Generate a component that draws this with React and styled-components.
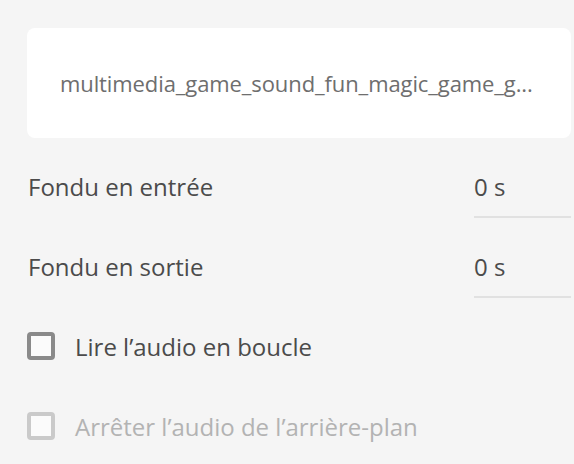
import React from 'react';
import styled, { createGlobalStyle } from 'styled-components';

const GlobalStyle = createGlobalStyle`
  html, body {
    margin: 0;
    padding: 0;
    background: #f5f5f5;
  }
  body {
    font-family: 'Open Sans', 'Noto Sans', sans-serif;
  }
`;

const Panel = styled.div`
  width: 574px;
  height: 464px;
  box-sizing: border-box;
  padding: 28px 3px 0 27px;
  background: #f5f5f5;
  overflow: hidden;
`;

const FileCard = styled.div`
  height: 110px;
  background: #ffffff;
  border-radius: 8px;
  display: flex;
  align-items: center;
  padding: 0 33px;
  box-sizing: border-box;
`;

const FileName = styled.span`
  font-size: 22px;
  color: #6e6e6e;
  white-space: nowrap;
  overflow: hidden;
  letter-spacing: -0.1px;
`;

const FieldRow = styled.div`
  display: flex;
  align-items: flex-end;
  justify-content: space-between;
  height: 80px;
`;

const FieldLabel = styled.span`
  font-size: 24px;
  color: #4b4b4b;
  line-height: 30px;
  margin: 0 0 16px 1px;
`;

const DurationInput = styled.div`
  width: 97px;
  height: 46px;
  box-sizing: border-box;
  border-bottom: 2px solid #e1e1e1;
  font-size: 24px;
  color: #4b4b4b;
  line-height: 30px;
`;

const CheckRow = styled.label`
  display: flex;
  align-items: center;
  gap: 20px;
  height: 28px;
  margin-top: ${({ $first }) => ($first ? '34px' : '52px')};
  color: ${({ $disabled }) => ($disabled ? '#b3b3b3' : '#4b4b4b')};
  font-size: 24px;
`;

const Box = styled.span`
  width: 28px;
  height: 28px;
  box-sizing: border-box;
  border: 4px solid ${({ $disabled }) => ($disabled ? '#cacaca' : '#8a8a8a')};
  border-radius: 4px;
  background: #fbfbfb;
  flex-shrink: 0;
`;

const fields = [
  { label: 'Fondu en entrée', value: '0 s' },
  { label: 'Fondu en sortie', value: '0 s' },
];

export default function App() {
  return (
    <>
      <GlobalStyle />
      <Panel>
        <FileCard>
          <FileName>multimedia_game_sound_fun_magic_game_g...</FileName>
        </FileCard>
        {fields.map((f) => (
          <FieldRow key={f.label}>
            <FieldLabel>{f.label}</FieldLabel>
            <DurationInput>{f.value}</DurationInput>
          </FieldRow>
        ))}
        <CheckRow $first>
          <Box />
          Lire l’audio en boucle
        </CheckRow>
        <CheckRow $disabled>
          <Box $disabled />
          Arrêter l’audio de l’arrière-plan
        </CheckRow>
      </Panel>
    </>
  );
}
